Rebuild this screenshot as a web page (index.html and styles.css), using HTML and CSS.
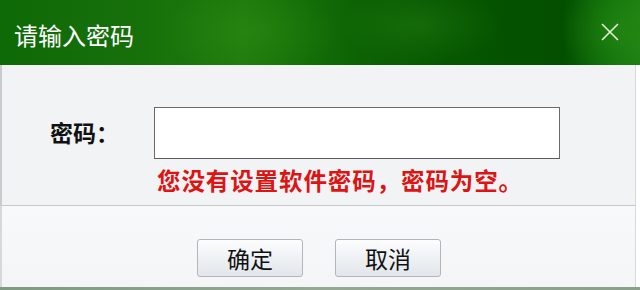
FILE: index.html
```html
<!DOCTYPE html>
<html lang="zh">
<head>
<meta charset="utf-8">
<link rel="stylesheet" href="styles.css">
</head>
<body>
<div class="window">
  <div class="titlebar">
    <span class="title">请输入密码</span>
    <svg class="close" width="18" height="18" viewBox="0 0 18 18">
      <path d="M1 1L17 17M17 1L1 17" stroke="#e6f5dc" stroke-width="1.6" fill="none"/>
    </svg>
  </div>
  <div class="panel">
    <div class="row">
      <span class="label">密码：</span>
      <div class="input"></div>
    </div>
    <div class="msg">您没有设置软件密码，密码为空。</div>
  </div>
  <div class="footer">
    <button class="btn">确定</button>
    <button class="btn">取消</button>
  </div>
  <div class="bottomline"></div>
</div>
</body>
</html>
```
FILE: styles.css
```css
html, body {
  margin: 0;
  padding: 0;
  background: #ffffff;
}
.window {
  width: 640px;
  height: 290px;
  display: flex;
  flex-direction: column;
  font-family: "Noto Sans CJK SC", "Noto Sans", sans-serif;
  overflow: hidden;
}
.titlebar {
  height: 65px;
  flex: none;
  display: flex;
  align-items: center;
  justify-content: space-between;
  padding: 0 21px 0 14px;
  box-sizing: border-box;
  background:
    radial-gradient(ellipse 90px 45px at 250px 32px, rgba(50,140,20,0.45), rgba(50,140,20,0) 100%),
    radial-gradient(ellipse 80px 40px at 420px 25px, rgba(40,130,20,0.4), rgba(40,130,20,0) 100%),
    radial-gradient(ellipse 60px 50px at 620px 30px, rgba(40,140,20,0.6), rgba(40,140,20,0) 100%),
    linear-gradient(90deg, #0e6a06 0%, #166f0a 20%, #1d7c0c 38%, #0d6404 55%, #065600 70%, #034f00 88%, #10700a 95%, #1d7f12 100%);
}
.title {
  color: #ffffff;
  font-size: 24px;
  line-height: 30px;
  margin-top: 5px;
}
.close {
  display: block;
  margin-top: -1px;
}
.panel {
  height: 141px;
  flex: none;
  box-sizing: border-box;
  background: #f2f3f5;
  border-left: 2px solid #c9cccf;
  border-right: 1px solid #d7d9db;
  margin-right: 4px;
  border-bottom: 1px solid #c6c8ca;
  padding: 42px 0 0 48px;
}
.row {
  display: flex;
  align-items: center;
  height: 52px;
}
.label {
  width: 104px;
  font-size: 23px;
  font-weight: bold;
  color: #111111;
  margin-top: -2px;
}
.input {
  width: 406px;
  height: 52px;
  box-sizing: border-box;
  border: 1px solid #6a6a6a;
  border-bottom-color: #5a5a5a;
  background: #ffffff;
}
.msg {
  margin: 5px 0 0 107px;
  font-size: 23.5px;
  line-height: 32px;
  font-weight: bold;
  color: #dd1414;
  letter-spacing: 0.9px;
}
.footer {
  flex: 1;
  display: flex;
  gap: 32px;
  padding: 33px 0 0 195px;
  box-sizing: border-box;
  background: linear-gradient(180deg, #f8f9fb 0%, #f3f5f7 100%);
  border-left: 2px solid #d6d8da;
  border-right: 1px solid #d7d9db;
  margin-right: 4px;
}
.btn {
  width: 106px;
  height: 38px;
  box-sizing: border-box;
  border: 1px solid #b2b6bb;
  border-radius: 3px;
  background: linear-gradient(180deg, #fdfdfe 0%, #eef1f4 50%, #e2e6ea 100%);
  font-family: "Noto Sans CJK SC", "Noto Sans", sans-serif;
  font-size: 23px;
  line-height: 30px;
  color: #111111;
  padding: 0;
}
.bottomline {
  height: 3px;
  flex: none;
  background: linear-gradient(90deg, #7f9a80, #94a894 50%, #8aa08a);
}
```
